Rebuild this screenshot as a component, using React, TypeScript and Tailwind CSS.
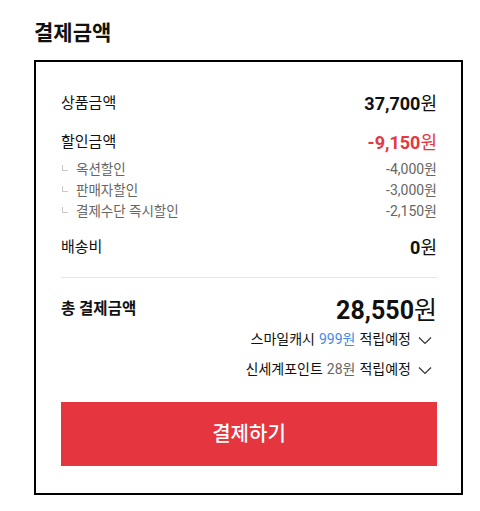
import React from "react";

const font = { fontFamily: "Roboto, 'Noto Sans CJK KR', sans-serif" };

function Sub({ label, value }: { label: string; value: string }) {
  return (
    <div className="flex h-[21px] items-center justify-between text-[#666]">
      <div className="flex items-center">
        <span className="ml-[1px] mr-[8px] mb-[4px] block h-[6px] w-[6px] border-b border-l border-[#c8c8c8]" />
        <span className="text-[13.5px]">{label}</span>
      </div>
      <span className="text-[14px]">{value}</span>
    </div>
  );
}

function Chevron() {
  return (
    <svg width="14" height="9" viewBox="0 0 14 9" className="ml-[7px] mr-[5px] mt-[2px]">
      <polyline points="1,1.5 7,7.5 13,1.5" fill="none" stroke="#333" strokeWidth="1.2" />
    </svg>
  );
}

export default function App() {
  return (
    <div className="min-h-[511px] w-[480px] bg-white pl-[34px] pt-[17px]" style={font}>
      <h2 className="h-[32px] text-[21px] font-bold leading-[32px] text-[#111]">결제금액</h2>
      <div className="mt-[11px] w-[429px] border-2 border-black pb-[27px] pl-[25px] pr-[24px] pt-[29px] text-[#111]">
        <div className="flex h-[24px] items-center justify-between">
          <span className="text-[15px]">상품금액</span>
          <span className="text-[18px] font-bold">
            37,700<span className="font-normal">원</span>
          </span>
        </div>
        <div className="mt-[15px] flex h-[24px] items-center justify-between">
          <span className="text-[15px]">할인금액</span>
          <span className="text-[18px] font-bold text-[#e63740]">
            -9,150<span className="font-normal">원</span>
          </span>
        </div>
        <div className="mt-[5px]">
          <Sub label="옥션할인" value="-4,000원" />
          <Sub label="판매자할인" value="-3,000원" />
          <Sub label="결제수단 즉시할인" value="-2,150원" />
        </div>
        <div className="mt-[13px] flex h-[24px] items-center justify-between">
          <span className="text-[15px]">배송비</span>
          <span className="text-[18px] font-bold">
            0<span className="font-normal">원</span>
          </span>
        </div>
        <div className="mt-[18px] h-px bg-[#e5e5e5]" />
        <div className="mt-[17px] flex h-[30px] items-center justify-between">
          <span className="text-[15.5px] font-bold">총 결제금액</span>
          <span className="text-[25px] font-bold leading-none">
            28,550<span className="font-normal">원</span>
          </span>
        </div>
        <div className="mt-[2px] flex h-[24px] items-center justify-end text-[14px]">
          <span>스마일캐시</span>
          <span className="ml-[4px] text-[#3f8be6]">999원</span>
          <span className="ml-[4px]">적립예정</span>
          <Chevron />
        </div>
        <div className="mt-[6px] flex h-[24px] items-center justify-end text-[14px]">
          <span>신세계포인트</span>
          <span className="ml-[4px] text-[#666]">28원</span>
          <span className="ml-[4px]">적립예정</span>
          <Chevron />
        </div>
        <button className="mt-[21px] flex h-[64px] w-full items-center justify-center bg-[#e5363f] text-[20px] font-medium text-white">
          결제하기
        </button>
      </div>
    </div>
  );
}
